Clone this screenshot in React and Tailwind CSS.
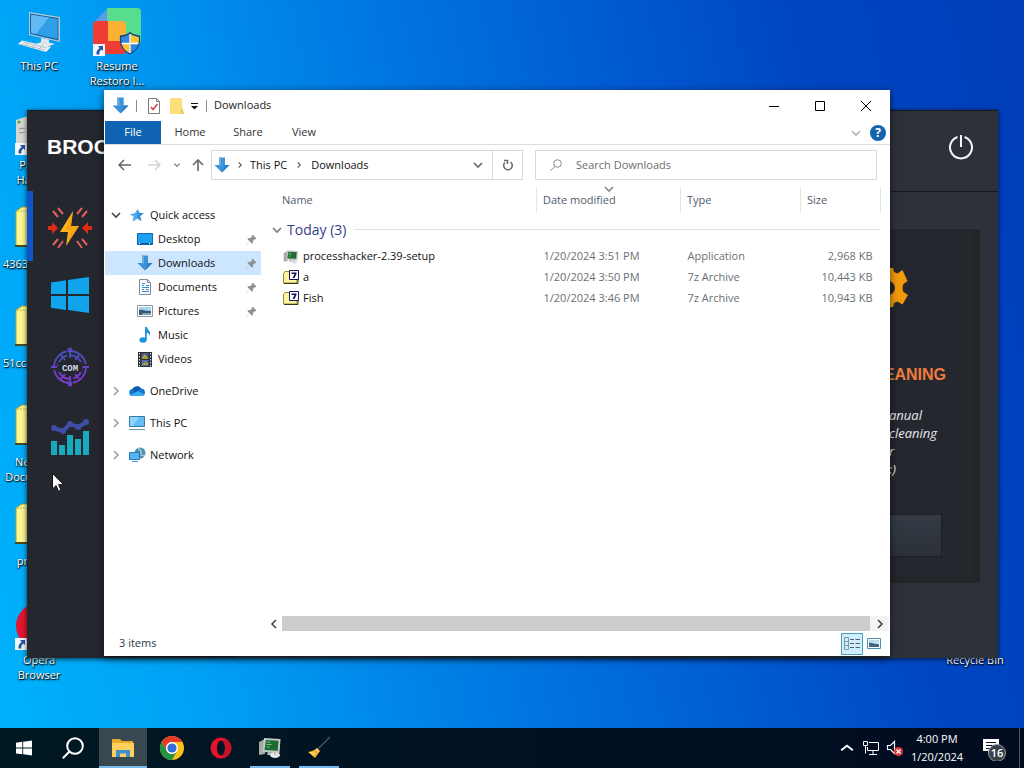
import React from "react";

const LABEL_SHADOW = "[text-shadow:0_1px_2px_rgba(0,0,0,0.95),1px_1px_1px_rgba(0,0,0,0.8)]";

/* ---------- shared icons ---------- */

function DownArrow({ className }) {
  return (
    <svg viewBox="0 0 16 16" className={className} aria-hidden="true">
      <path d="M5 .5h6v7.5h4.5L8 15.5.5 8H5z" fill="#3c92d8" />
      <path d="M5 .5h2v8H5z" fill="#66aee6" />
      <path d="M11 8h4.5L8 15.5z" fill="#2f7fc4" />
    </svg>
  );
}

function Chevron({ dir = "right", className }) {
  const d = { right: "M4 2l4 4-4 4", down: "M2 4l4 4 4-4", left: "M8 2L4 6l4 4", up: "M1 8l5-4 5 4" }[dir];
  return (
    <svg viewBox="0 0 12 12" className={className} fill="none" stroke="currentColor" strokeWidth="1.6" aria-hidden="true">
      <path d={d} />
    </svg>
  );
}

function ShortcutBadge() {
  return (
    <svg viewBox="0 0 12 12" className="absolute bottom-0 left-0 size-3" aria-hidden="true">
      <path d="M0 0h12v12H0z" fill="#f4f6fa" />
      <path d="M5 2h5v5L8.300 5.500C6.500 7 6 8.500 6.500 10.500H3.500C3 7.500 4.500 5.500 6.700 3.900z" fill="#2257a8" />
    </svg>
  );
}

function ComputerIcon() {
  return (
    <svg viewBox="0 0 48 48" className="size-12" aria-hidden="true">
      <path d="M14 4l31 5v25L14 27z" fill="#b9c9d6" />
      <path d="M15 5.500l28.500 4.500v22.500L15 26z" fill="#1262a6" />
      <path d="M16 6.800l26.500 4.200v20L16 25z" fill="#2f9fe8" />
      <path d="M16 6.800l18 2.800-13 16.500-5-1.200z" fill="#62baf4" />
      <path d="M26 30l8 1.500v3l6 1.500-8 3-11-3 5-2z" fill="#dfe5ea" />
      <path d="M7 32.500l29 6.500-5 5L3 36z" fill="#eef1f4" />
      <path d="M8 34l24 6M6 36l24 6M14 34l-4 4M21 35.500l-4 4.500M28 37l-5 5" stroke="#aab4bd" strokeWidth=".8" />
    </svg>
  );
}

function RestoroIcon() {
  return (
    <svg viewBox="0 0 48 48" className="size-12" aria-hidden="true">
      <path d="M14 0h30a4 4 0 014 4v30H14z" fill="#58dc8d" />
      <path d="M14 1v12H2z" fill="#5b9be8" />
      <path d="M4 13h11v20h17v13H4a4 4 0 01-4-4V17a4 4 0 014-4z" fill="#ef3d36" />
      <path d="M15 13h14a4 4 0 014 4v16H15z" fill="#f9b233" />
      <path d="M37 24c3 2.500 6 3 10 3.500 1 9-2 15-10 19-8-4-11-10-10-19 4-.5 7-1 10-3.500z" fill="#12477c" />
      <path d="M36.300 26v9H28.500c-.4-2-.4-4-.3-6 3-.5 5.600-1 8.100-3z" fill="#2f86dc" />
      <path d="M37.700 26v9h7.800c.4-2 .4-4 .3-6-3-.5-5.600-1-8.100-3z" fill="#ffc52e" />
      <path d="M36.300 36v9c-4-2-6.500-5-7.500-9z" fill="#ffc52e" />
      <path d="M37.700 36v9c4-2 6.500-5 7.500-9z" fill="#2f86dc" />
      <path d="M37 26v19M28.500 35.500h17" stroke="#fff" strokeWidth="1.500" />
    </svg>
  );
}

function ArchiveFolder() {
  return (
    <svg viewBox="0 4 48 48" className="size-12" aria-hidden="true">
      <path d="M1 9l6-4h12l5 4h20v35H1z" fill="#fbf793" stroke="#a5a23c" />
      <path d="M11 9v35" stroke="#ece27c" strokeWidth="1.500" />
      <path d="M2 9h20" stroke="#b7b04a" strokeDasharray="2 1" />
      <path d="M0 44h45" stroke="#4c4a17" strokeWidth="2" />
    </svg>
  );
}

function HackerDesktopIcon() {
  return (
    <svg viewBox="0 0 48 48" className="size-12" aria-hidden="true">
      <path d="M1 13l12-4v27l-12 3z" fill="#d5d6d2" />
      <path d="M13 9h24v27H13z" fill="#b4b7b3" />
      <circle cx="4" cy="15" r="1.500" fill="#49a244" />
      <path d="M4 22l6-1M4 26l6-1" stroke="#8d918d" />
      <path d="M14 12h20v18H14z" fill="#28502c" />
    </svg>
  );
}

function OperaIcon({ className }) {
  return (
    <svg viewBox="0 0 24 24" className={className} aria-hidden="true">
      <path fillRule="evenodd" fill="#e3152e" d="M12 .5a11.500 11.500 0 100 23 11.500 11.500 0 000-23zm0 3.500c2.700 0 4.300 3.600 4.300 8s-1.600 8-4.300 8-4.300-3.600-4.300-8S9.300 4 12 4z" />
      <path fill="#a90f20" d="M12 20c2.700 0 4.300-3.600 4.300-8S14.700 4 12 4c2.500-1.800 5-1.600 7.500-.8a11.500 11.500 0 010 17.600C17 21.600 14.500 21.800 12 20z" opacity=".55" />
    </svg>
  );
}

function MonitorApp({ className }) {
  return (
    <svg viewBox="0 0 24 24" className={className} aria-hidden="true">
      <path d="M1 6l6-3v15l-6 1z" fill="#a7aba7" />
      <path d="M6 2l16.500 1-1 14L4.500 16z" fill="#c3c9c3" />
      <path d="M8 4l12.500.8-.8 10L6.500 14z" fill="#1d6a32" />
      <path d="M9 6h3M8.500 8.500h5M8.500 11h3" stroke="#7cc583" />
      <path d="M10 16l5 .3V19H9z" fill="#b8bcb8" />
      <ellipse cx="17" cy="19" rx="5" ry="3" fill="#e5e7e8" />
      <path d="M17 16v3" stroke="#8a8f90" />
    </svg>
  );
}

/* ---------- desktop ---------- */

function DesktopIcon({ label, shortcut, start, children }) {
  return (
    <a href="#open" className={`flex h-[99px] w-[78px] flex-col items-center gap-0.5 pt-2 text-[11px] leading-[15px] text-white ${LABEL_SHADOW}`}>
      <span className="relative block size-12">
        {children}
        {shortcut && <ShortcutBadge />}
      </span>
      <span className={`w-[72px] whitespace-pre-line ${start ? "text-left" : "text-center"}`}>{label}</span>
    </a>
  );
}

/* ---------- cleaner window ---------- */

function BoltIcon() {
  return (
    <svg viewBox="0 0 44 44" className="size-11" aria-hidden="true">
      <path d="M25 5L12 26h8l-2 14 13-20h-8z" fill="#ffb51e" />
      <path d="M25 5l-2 15h8L18 40l5-16h-6z" fill="#f59a0c" opacity=".6" />
      <path d="M0 20h4v-4l6 6-6 6v-4H0zM44 20h-4v-4l-6 6 6 6v-4h4z" fill="#dd2a12" />
      <path d="M5 5l5 6M10 2l5 6M39 5l-5 6M34 2l-5 6M5 39l5-6M10 42l5-7M39 39l-5-6M34 42l-5-7" stroke="#df6157" strokeWidth="2" />
    </svg>
  );
}

function WindowsIcon({ className, color }) {
  return (
    <svg viewBox="0 0 38 36" className={className} fill={color} aria-hidden="true">
      <path d="M0 5.500L15 3.300V17H0zM17 3L38 0v17H17zM0 19h15v14L0 30.800zM17 19h21v17l-21-3z" />
    </svg>
  );
}

function ComIcon() {
  return (
    <svg viewBox="0 0 40 40" className="size-10" fill="none" aria-hidden="true">
      <defs>
        <linearGradient id="com" x1="0" y1="0" x2="0" y2="1">
          <stop offset="0" stopColor="#4052b8" />
          <stop offset="1" stopColor="#8b35dc" />
        </linearGradient>
      </defs>
      <g stroke="url(#com)" strokeWidth="1.800">
        <circle cx="20" cy="20" r="16" strokeDasharray="22 3" />
        <circle cx="20" cy="20" r="12" strokeDasharray="15 4" />
        <path d="M20 1v10M20 29v10M1 20h6M33 20h6M11 8l4 5M29 8l-4 5M11 32l4-5M29 32l-4-5" />
        <circle cx="20" cy="3" r="1.500" />
        <circle cx="20" cy="37" r="1.500" />
      </g>
      <path d="M8 15h24v10H8z" fill="#25272f" />
      <text x="20" y="24" textAnchor="middle" fontSize="9" fontWeight="700" fill="#d3d8e6" fontFamily="Liberation Mono, monospace">COM</text>
    </svg>
  );
}

function StatsIcon() {
  return (
    <svg viewBox="0 0 40 38" className="h-[38px] w-10" aria-hidden="true">
      <path d="M1 23h6v14H1zM9 27h6v10H9zM17 17h6v20h-6zM25 21h6v16h-6zM33 13h6v24h-6z" fill="#19a9bd" />
      <path d="M3 10l10 3 7-7 8 3 9-5" fill="none" stroke="#3f4da4" strokeWidth="4" />
      <g fill="#3f4da4">
        <circle cx="4" cy="10" r="3" />
        <circle cx="13" cy="13" r="3" />
        <circle cx="20" cy="6" r="3" />
        <circle cx="28" cy="9" r="3" />
        <circle cx="36" cy="4" r="3" />
      </g>
    </svg>
  );
}

function CleanerWindow() {
  return (
    <section aria-label="Cleaner" className="absolute top-[110px] right-[26px] bottom-[70px] left-[27px] flex overflow-hidden border-t border-[#17191d] bg-[#2d323a] font-['Liberation_Sans',sans-serif] shadow-[0_1px_5px_rgba(0,0,0,0.7)]">
      <aside className="flex w-52 shrink-0 flex-col bg-[#25272f]">
        <h1 className="flex h-20 items-center pb-2 pl-5 text-[21px] font-bold text-white">BROOM</h1>
        <nav className="flex flex-col">
          <button aria-label="Boost" className="flex h-[70px] items-center border-l-[6px] border-[#0f55c8] pt-1 pl-[15px]"><BoltIcon /></button>
          <button aria-label="Windows" className="flex h-[68px] items-center pl-6"><WindowsIcon className="h-9 w-[38px]" color="#10a4ec" /></button>
          <button aria-label="COM" className="flex h-[76px] items-center pl-[23px]"><ComIcon /></button>
          <button aria-label="Statistics" className="flex h-16 items-center pl-[23px]"><StatsIcon /></button>
        </nav>
      </aside>
      <div className="flex min-w-0 flex-1 flex-col">
        <header className="flex h-[81px] shrink-0 items-center justify-end border-b border-[#16191d] pr-6 pb-2">
          <button aria-label="Power">
            <svg viewBox="0 0 26 26" className="size-[26px]" fill="none" stroke="#f5f6f7" strokeWidth="2" aria-hidden="true">
              <path d="M9.500 3a11 11 0 107 0M13 1v12" />
            </svg>
          </button>
        </header>
        <article className="mt-[37px] mr-[18px] ml-6 flex h-[354px] flex-col items-end border-r-8 border-b-8 border-[#232527] bg-[#25272f]">
          <svg viewBox="0 0 40 40" className="mt-[38px] mr-16 size-10" fill="#f39a0b" aria-hidden="true">
            <path fillRule="evenodd" d="M15 1h10l1 4 3.500 1.500L34.500 3l5 11-4 3a9 9 0 000 8l4.500 3-5.500 9.500-5-3L26 36l-1 4H15l-1-4-3.500-1.500-5 3L0 28l4.500-3a9 9 0 000-8L.5 14 5.500 3l5 3.500L14 5zm5 13a7 7 0 100 14 7 7 0 000-14z" />
          </svg>
          <h2 className="mt-[59px] mr-[26px] text-[16px] leading-[18px] font-bold text-[#ef7c3e]">CLEANING</h2>
          <p className="mt-[22px] w-[83px] font-['Open_Sans',sans-serif] text-[13px] leading-[18px] text-[#e8eaec] italic">
            anual<br />cleaning<br />r<br />:)
          </p>
          <button aria-label="Start cleaning" className="mt-9 mr-[30px] h-[43px] w-40 border border-[#1c1f24] bg-linear-to-b from-[#343b44] to-[#2b3038]" />
        </article>
      </div>
    </section>
  );
}

/* ---------- explorer window ---------- */

function StarIcon() {
  return (
    <svg viewBox="0 0 16 16" className="size-3.5" aria-hidden="true">
      <path d="M9 1l1.500 4.500L16 6l-4.300 3.200L13 15l-4.600-3L3 15l1.500-5.300L0 7l5.700-.8z" fill="#2c8ee0" />
      <path d="M9 1L8.400 12 3 15l1.500-5.300L0 7l5.700-.8z" fill="#54abef" />
    </svg>
  );
}

function DesktopSmall() {
  return (
    <svg viewBox="0 0 16 12" className="h-3 w-4" aria-hidden="true">
      <path d="M.5.500h15v11H.5z" fill="#1ba0f2" stroke="#1468ac" />
      <path d="M1 10.500h14" stroke="#0e5a98" />
      <path d="M2 10.500h1M12 10.500h1" stroke="#fff" />
    </svg>
  );
}

function DocumentSmall() {
  return (
    <svg viewBox="0 0 14 16" className="h-4 w-3.5" aria-hidden="true">
      <path d="M1.500.500h8l3 3v12h-11z" fill="#f7fbff" stroke="#7e8c98" />
      <path d="M9.500.500v3h3" fill="none" stroke="#7e8c98" />
      <path d="M4 4.500h3M4 6.500h2M8 6.500h3M4 8.500h7M4 10.500h2M8 10.500h3M4 12.500h7" stroke="#3a8cca" />
    </svg>
  );
}

function PictureSmall() {
  return (
    <svg viewBox="0 0 16 12" className="h-3 w-4" aria-hidden="true">
      <path d="M.5.500h15v11H.5z" fill="#fff" stroke="#8d99a5" />
      <path d="M2 2h12v4H2z" fill="#a7d3f1" />
      <path d="M2 5c4-1 5 1 12 1v4H2z" fill="#36597a" />
      <path d="M6 8h8v2H4z" fill="#7fa4b4" />
    </svg>
  );
}

function MusicSmall() {
  return (
    <svg viewBox="0 0 14 16" className="h-4 w-3.5" aria-hidden="true">
      <ellipse cx="5" cy="13" rx="3.600" ry="2.700" fill="#1f93e0" />
      <path d="M7 0h1.800c.5 3 4.700 4 3 9.500C12 7 10 6 8.800 5.800V13H7z" fill="#1f93e0" />
    </svg>
  );
}

function VideoSmall() {
  return (
    <svg viewBox="0 0 14 15" className="h-[15px] w-3.5" aria-hidden="true">
      <path d="M0 0h14v15H0z" fill="#2d2f38" />
      <path d="M1.500 1v14M12.500 1v14" stroke="#e4e6ea" strokeDasharray="1.500 1.500" />
      <path d="M3.500 1h7v6h-7z" fill="#4a5a8e" />
      <path d="M3.500 8h7v6h-7z" fill="#506aa5" />
      <path d="M4 5l3-3 3 4v1H4zM4 12l3-2 3 1v2H4z" fill="#a3a13e" />
    </svg>
  );
}

function CloudSmall() {
  return (
    <svg viewBox="0 0 16 12" className="h-3 w-4" aria-hidden="true">
      <path d="M4 11a3.500 3.500 0 01-.5-7A5 5 0 0112 3.500 3.800 3.800 0 0113 11z" fill="#1478d0" />
      <path d="M3.500 4A5 5 0 0112 3.500L6 8z" fill="#0b5bab" />
      <path d="M1 10l8-4 6.500 3.500A3 3 0 0113 11H4a4 4 0 01-3-1z" fill="#35aaf0" />
    </svg>
  );
}

function PcSmall() {
  return (
    <svg viewBox="0 0 18 16" className="h-4 w-[18px]" aria-hidden="true">
      <path d="M1.500 1.500h15v10h-15z" fill="#62bdf5" stroke="#3b7aa8" />
      <path d="M2 2h9L5 11H2z" fill="#8fd4fb" />
      <path d="M1 14.500h16" stroke="#7399b4" />
    </svg>
  );
}

function NetworkSmall() {
  return (
    <svg viewBox="0 0 18 16" className="h-4 w-[18px]" aria-hidden="true">
      <circle cx="12" cy="6" r="5.500" fill="#4c8fb0" />
      <path d="M10 1c2 2 4 2 3 5s2 3 4 2" fill="none" stroke="#a3cbd4" strokeWidth="1.500" />
      <path d="M1.500 5.500h10v7h-10z" fill="#55b5f2" stroke="#2877b4" />
      <path d="M4 14.500h6" stroke="#4a9ad2" />
    </svg>
  );
}

function PinIcon() {
  return (
    <svg viewBox="0 0 12 12" className="size-[11px]" aria-hidden="true">
      <path d="M7 .5L11.500 5l-1 .8-1-.2-2 2 .2 2-1.200 1L4 8 .800 11.500.500 11.200 4 8 1.500 5.500l1-1.200 2 .2 2-2-.2-1z" fill="#8c9197" />
    </svg>
  );
}

const QUICK = [
  { name: "Desktop", Icon: DesktopSmall, pinned: true },
  { name: "Downloads", Icon: DownArrow, pinned: true, active: true },
  { name: "Documents", Icon: DocumentSmall, pinned: true },
  { name: "Pictures", Icon: PictureSmall, pinned: true },
  { name: "Music", Icon: MusicSmall },
  { name: "Videos", Icon: VideoSmall },
];

const ROOTS = [
  { name: "OneDrive", Icon: CloudSmall },
  { name: "This PC", Icon: PcSmall },
  { name: "Network", Icon: NetworkSmall },
];

function SidebarTree() {
  return (
    <nav aria-label="Folders" className="flex w-[157px] shrink-0 flex-col gap-2 pt-[18px] text-[#111]">
      <div>
        <a href="#quick" className="flex h-6 items-center pl-1">
          <Chevron dir="down" className="mr-1.5 ml-0.5 size-3 text-[#444]" />
          <span className="mr-1 flex w-[18px] justify-center"><StarIcon /></span>
          Quick access
        </a>
        {QUICK.map(({ name, Icon, pinned, active }) => (
          <a key={name} href={`#${name}`} className={`ml-px flex h-6 items-center pr-1 pl-8 ${active ? "bg-[#cce6ff]" : ""}`}>
            <span className="mr-[5px] flex w-4 justify-center"><Icon className="size-4" /></span>
            <span className="flex-1">{name}</span>
            {pinned && <PinIcon />}
          </a>
        ))}
      </div>
      {ROOTS.map(({ name, Icon }) => (
        <a key={name} href={`#${name}`} className="flex h-6 items-center pl-1">
          <Chevron className="mr-1.5 ml-0.5 size-3 text-[#a0a0a0]" />
          <span className="mr-1 flex w-[18px] justify-center"><Icon /></span>
          {name}
        </a>
      ))}
    </nav>
  );
}

function SevenZipIcon() {
  return (
    <svg viewBox="0 0 16 15" className="h-[15px] w-4" aria-hidden="true">
      <path d="M.5 3.500l1.500-2h4l1 1.500h7v10H.5z" fill="#fbf5a2" stroke="#8d8a30" />
      <path d="M1 13.500h14V8" fill="none" stroke="#3b3a18" />
      <path d="M6.500.500h9v9h-9z" fill="#fff" stroke="#14145e" />
      <path d="M8.500 2.500h5v1.500l-2 4H9.500l2-4h-3z" fill="#14145e" />
    </svg>
  );
}

const FILES = [
  { name: "processhacker-2.39-setup", date: "1/20/2024 3:51 PM", type: "Application", size: "2,968 KB", app: true },
  { name: "a", date: "1/20/2024 3:50 PM", type: "7z Archive", size: "10,443 KB" },
  { name: "Fish", date: "1/20/2024 3:46 PM", type: "7z Archive", size: "10,943 KB" },
];

function FileTable() {
  const th = "relative h-[26px] border-l border-[#e2e4e6] pl-1.5 text-left font-normal";
  return (
    <table className="w-full table-fixed border-collapse text-[#6b6f74]">
      <colgroup>
        <col />
        <col className="w-36" />
        <col className="w-[120px]" />
        <col className="w-20" />
      </colgroup>
      <thead className="text-[#4f5c6e]">
        <tr>
          <th className="pl-[17px] text-left font-normal">Name</th>
          <th className={th}>
            Date modified
            <Chevron dir="down" className="absolute -top-1 left-[66px] size-3 text-[#8a8a8a]" />
          </th>
          <th className={th}>Type</th>
          <th className={`${th} border-r`}>Size</th>
        </tr>
      </thead>
      <tbody>
        <tr>
          <th colSpan={4} className="h-[33px] p-0 text-left font-normal">
            <span className="flex items-center gap-1 pl-1.5 text-[14px] text-[#35408a]">
              <Chevron dir="down" className="size-3 text-[#7a7a7a]" />
              Today (3)
              <span className="ml-1 h-px flex-1 bg-[#dfe2e6]" />
            </span>
          </th>
        </tr>
        {FILES.map((f) => (
          <tr key={f.name} className="h-[21px]">
            <td className="p-0 pl-[18px] text-[#111]">
              <span className="flex items-center gap-1">
                {f.app ? <MonitorApp className="size-4" /> : <SevenZipIcon />}
                {f.name}
              </span>
            </td>
            <td className="p-0 pl-[7px]">{f.date}</td>
            <td className="p-0 pl-[7px]">{f.type}</td>
            <td className="p-0 pr-2 text-right">{f.size}</td>
          </tr>
        ))}
      </tbody>
    </table>
  );
}

function ExplorerWindow() {
  return (
    <section aria-label="Downloads" className="absolute top-[90px] right-[134px] bottom-[72px] left-[104px] flex flex-col bg-white shadow-[0_2px_8px_rgba(0,0,0,0.6)]">
      <header className="flex h-[31px] shrink-0 items-center pr-px pl-2 text-[#222]">
        <DownArrow className="size-[17px]" />
        <span className="mx-[7px] h-3 w-px bg-[#8b8b8b]" />
        <button aria-label="Properties" className="ml-[3px]">
          <svg viewBox="0 0 14 16" className="h-4 w-3.5" aria-hidden="true">
            <path d="M1.500.500h8l3 3v12h-11z" fill="#fff" stroke="#7c7c7c" />
            <path d="M9.500.500v3h3" fill="none" stroke="#7c7c7c" />
            <path d="M4 9l2 2.500L10.500 6" fill="none" stroke="#d8404d" strokeWidth="1.600" />
          </svg>
        </button>
        <button aria-label="New folder" className="ml-[9px]">
          <svg viewBox="0 0 14 16" className="h-4 w-3.5" aria-hidden="true">
            <path d="M0 0h12v10l2 6H0z" fill="#fae07c" />
            <path d="M12 9l2 7h-3v-5z" fill="#ecc45a" />
          </svg>
        </button>
        <button aria-label="Customize toolbar" className="ml-1.5">
          <svg viewBox="0 0 9 8" className="h-2 w-[9px]" aria-hidden="true">
            <path d="M1 1.500h7" stroke="#111" />
            <path d="M1 4h7L4.500 7.500z" fill="#111" />
          </svg>
        </button>
        <span className="mx-[7px] h-3 w-px bg-[#8b8b8b]" />
        <h2>Downloads</h2>
        <div className="ml-auto flex text-black">
          <button aria-label="Minimize" className="flex h-[30px] w-[46px] items-center justify-center">
            <svg viewBox="0 0 10 10" className="size-2.5" stroke="currentColor" aria-hidden="true"><path d="M0 5.500h10" /></svg>
          </button>
          <button aria-label="Maximize" className="flex h-[30px] w-[46px] items-center justify-center">
            <svg viewBox="0 0 10 10" className="size-2.5" stroke="currentColor" fill="none" aria-hidden="true"><path d="M.5.500h9v9h-9z" /></svg>
          </button>
          <button aria-label="Close" className="flex h-[30px] w-[46px] items-center justify-center">
            <svg viewBox="0 0 10 10" className="size-2.5" stroke="currentColor" aria-hidden="true"><path d="M0 0l10 10M10 0L0 10" /></svg>
          </button>
        </div>
      </header>

      <div className="flex h-6 shrink-0 items-center border-b border-[#dcdcdc] pl-px text-[#333]">
        <button className="h-[23px] w-14 bg-[#0f63b0] text-white">File</button>
        <button className="w-[58px]">Home</button>
        <button className="w-[58px]">Share</button>
        <button className="w-[54px]">View</button>
        <button aria-label="Expand ribbon" className="ml-auto"><Chevron dir="down" className="size-3 text-[#b0b0b0]" /></button>
        <button aria-label="Help" className="mr-1 ml-2 flex size-4 items-center justify-center rounded-full bg-[#1464ac] text-[12px] leading-4 font-bold text-white">?</button>
      </div>

      <div className="flex h-10 shrink-0 items-center pr-[13px] pl-3.5">
        <button aria-label="Back">
          <svg viewBox="0 0 13 12" className="h-3 w-[13px]" fill="none" stroke="#666" strokeWidth="1.500" aria-hidden="true"><path d="M13 6H1M6 1L1 6l5 5" /></svg>
        </button>
        <button aria-label="Forward" className="ml-[17px]">
          <svg viewBox="0 0 13 12" className="h-3 w-[13px]" fill="none" stroke="#d2d2d2" strokeWidth="1.500" aria-hidden="true"><path d="M0 6h12M7 1l5 5-5 5" /></svg>
        </button>
        <button aria-label="Recent" className="ml-3"><Chevron dir="down" className="size-2 text-[#666]" /></button>
        <button aria-label="Up" className="mr-[7px] ml-[11px]">
          <svg viewBox="0 0 12 12" className="size-3" fill="none" stroke="#666" strokeWidth="1.600" aria-hidden="true"><path d="M6 12V1M1 6l5-5 5 5" /></svg>
        </button>
        <div className="flex h-[30px] min-w-0 flex-1 items-center border border-[#d9d9d9] pl-0.5 text-[#111]">
          <DownArrow className="size-4" />
          <Chevron className="mx-1.5 size-2 text-[#555]" />
          <a href="#pc">This PC</a>
          <Chevron className="mx-2 size-2 text-[#555]" />
          <a href="#downloads">Downloads</a>
          <button aria-label="Previous locations" className="mr-2 ml-auto"><Chevron dir="down" className="size-3 text-[#666]" /></button>
          <button aria-label="Refresh" className="flex h-full w-[30px] items-center justify-center border-l border-[#d9d9d9]">
            <svg viewBox="0 0 12 12" className="size-3" fill="none" stroke="#666" strokeWidth="1.500" aria-hidden="true">
              <path d="M8.500 3A4.300 4.300 0 112.800 3.600M2 1.500h3.500V5" />
            </svg>
          </button>
        </div>
        <label className="ml-3 flex h-[30px] w-[342px] items-center border border-[#d9d9d9] pl-3.5">
          <svg viewBox="0 0 12 12" className="size-3" fill="none" stroke="#888" aria-hidden="true">
            <circle cx="7.500" cy="4.500" r="3.800" />
            <path d="M5 7.500L.5 11.500" />
          </svg>
          <input type="text" aria-label="Search Downloads" placeholder="Search Downloads" className="ml-3.5 min-w-0 flex-1 bg-transparent outline-none placeholder:text-[#6d6d6d]" />
        </label>
      </div>

      <div className="flex min-h-0 flex-1">
        <SidebarTree />
        <div className="ml-1 flex min-w-0 flex-1 flex-col">
          <div className="flex-1 pt-0.5 pr-[9px]"><FileTable /></div>
          <div className="mr-px flex h-[15px] items-stretch">
            <button aria-label="Scroll left" className="flex w-[17px] items-center justify-center text-[#444]"><Chevron dir="left" className="size-3" /></button>
            <div className="flex-1 bg-[#cdcdcd]" />
            <button aria-label="Scroll right" className="flex w-[19px] items-center justify-center bg-[#f3f3f3] text-[#444]"><Chevron className="size-3" /></button>
          </div>
        </div>
      </div>

      <footer className="flex h-[25px] shrink-0 items-center pl-[15px] text-[#26374c]">
        3 items
        <button aria-label="Details view" className="ml-auto flex size-[22px] items-center justify-center border border-[#4a9cbe] bg-[#cdeefa]">
          <svg viewBox="0 0 16 13" className="h-[13px] w-4" fill="none" aria-hidden="true">
            <path d="M.5.500h4v12h-4zM.5 4.500h4M.5 8.500h4" stroke="#7b98a8" />
            <path d="M6 2.500h4M11.500 2.500H16M6 6.500h4M11.500 6.500H16M6 10.500h4M11.500 10.500H16" stroke="#555c63" />
          </svg>
        </button>
        <button aria-label="Thumbnail view" className="mr-[9px] ml-1">
          <svg viewBox="0 0 14 11" className="h-[11px] w-3.5" aria-hidden="true">
            <path d="M.5.500h13v10H.5z" fill="#fff" stroke="#4a90b4" />
            <path d="M2 2h10v3H2z" fill="#b8dcf0" />
            <path d="M2 5c3-1 5 1 10 1v3H2z" fill="#3d6780" />
          </svg>
        </button>
      </footer>
    </section>
  );
}

/* ---------- taskbar ---------- */

function TaskButton({ label, running, active, children }) {
  return (
    <button aria-label={label} className={`relative flex h-10 w-12 items-center justify-center ${active ? "bg-[#374850]" : ""}`}>
      {children}
      {running && <span className={`absolute bottom-0 h-0.5 bg-[#76b9ed] ${active ? "w-12" : "w-10"}`} />}
    </button>
  );
}

function Taskbar() {
  return (
    <footer className="flex h-10 shrink-0 items-center bg-linear-to-r from-[#001824] to-[#020b20] text-white">
      <button aria-label="Start" className="flex h-10 w-12 items-center justify-center"><WindowsIcon className="size-4" color="#ffffff" /></button>
      <button aria-label="Search" className="mr-px flex h-10 w-[50px] items-center justify-center">
        <svg viewBox="0 0 22 22" className="size-[22px]" fill="none" stroke="#fff" strokeWidth="2" aria-hidden="true">
          <circle cx="13" cy="9" r="7.800" />
          <path d="M7.500 14.500L.8 21.200" />
        </svg>
      </button>
      <div className="flex gap-px">
        <TaskButton label="File Explorer" running active>
          <svg viewBox="0 0 22 18" className="h-[18px] w-[22px]" aria-hidden="true">
            <path d="M0 0h8l2 2h11v15H0z" fill="#e9a92e" />
            <path d="M0 4h22v14H0z" fill="#ffd05c" />
            <path d="M4 18v-7h14v7h-4v-3.500H8V18z" fill="#3f8fd0" />
          </svg>
        </TaskButton>
        <TaskButton label="Chrome">
          <svg viewBox="0 0 24 24" className="size-6" aria-hidden="true">
            <circle cx="12" cy="12" r="12" fill="#fbc116" />
            <path d="M1.600 6A12 12 0 0122.400 6H12a6 6 0 00-5.200 9z" fill="#e33b2e" />
            <path d="M1.600 6A12 12 0 0012 24l5.200-9A6 6 0 016.800 15z" fill="#229342" />
            <circle cx="12" cy="12" r="6" fill="#fff" />
            <circle cx="12" cy="12" r="4.600" fill="#2e6fdf" />
          </svg>
        </TaskButton>
        <TaskButton label="Opera"><OperaIcon className="size-[22px]" /></TaskButton>
        <TaskButton label="Process Hacker setup" running><MonitorApp className="size-6" /></TaskButton>
        <TaskButton label="Cleaner" running>
          <svg viewBox="0 0 24 24" className="size-6" aria-hidden="true">
            <path d="M23 1L11 13" stroke="#4c5058" strokeWidth="1.500" />
            <path d="M10 12l3 3-5 7-7-6c3-1 6-1 9-4z" fill="#f5b52c" />
            <path d="M3 16.500l4 1-1 2M9 13l3 2.500" fill="none" stroke="#fbe0a0" strokeWidth="1.200" />
          </svg>
        </TaskButton>
      </div>
      <div className="ml-auto flex items-center">
        <button aria-label="Hidden icons"><Chevron dir="up" className="size-3.5" /></button>
        <svg viewBox="0 0 18 16" className="ml-2 h-4 w-[18px]" fill="none" stroke="#fff" role="img" aria-label="Network">
          <path d="M7 2.500h9.500v8h-11V7M11 11v3M7 14.500h8M1.500 1.500h4v4h-4zM3.500 6v7.500" />
        </svg>
        <svg viewBox="0 0 18 16" className="ml-1.5 h-4 w-[18px]" role="img" aria-label="Muted">
          <path d="M1.500 5.500h3l4-4v12l-4-4h-3z" fill="none" stroke="#fff" strokeWidth="1.200" />
          <circle cx="12.500" cy="11.500" r="4.500" fill="#d9373f" />
          <path d="M10.500 9.500l4 4M14.500 9.500l-4 4" stroke="#fff" strokeWidth="1.200" />
        </svg>
        <time className="ml-1.5 w-[54px] text-center leading-[18px] whitespace-nowrap">4:00 PM<br />1/20/2024</time>
        <button aria-label="16 notifications" className="relative ml-[19px] h-[26px] w-7">
          <svg viewBox="0 0 28 26" className="size-full" aria-hidden="true">
            <path d="M0 4h16v12H8l-3 3v-3H0z" fill="#fff" />
            <path d="M3 7.500h10M3 10.500h10M3 13.500h5" stroke="#0a1420" />
            <circle cx="14" cy="18" r="8.500" fill="#3a4048" stroke="#9aa0a6" />
          </svg>
          <span className="absolute inset-x-0 top-[9px] text-center leading-[18px] font-semibold">16</span>
        </button>
        <span className="mr-1 ml-2 h-10 w-px bg-[#4b5566]" />
      </div>
    </footer>
  );
}

export default function App() {
  return (
    <div className="flex min-h-screen flex-col bg-[#0078d7] font-['Open_Sans',sans-serif] text-[11px]">
      <main className="relative min-h-[700px] flex-1 overflow-hidden bg-[linear-gradient(78deg,#00b2fc_0%,#00a0f4_18%,#0080e6_38%,#0060d6_60%,#0046c4_80%,#003db8_100%)]">
        <div className="flex items-start">
          <div className="flex flex-col">
            <DesktopIcon label="This PC"><ComputerIcon /></DesktopIcon>
            <DesktopIcon label={"Process\nHacker 2"} shortcut><HackerDesktopIcon /></DesktopIcon>
            <DesktopIcon label="4363" start><ArchiveFolder /></DesktopIcon>
            <DesktopIcon label="51cc" start><ArchiveFolder /></DesktopIcon>
            <DesktopIcon label={"New Text\nDocuments..."}><ArchiveFolder /></DesktopIcon>
            <DesktopIcon label="program"><ArchiveFolder /></DesktopIcon>
            <DesktopIcon label={"Opera\nBrowser"} shortcut><OperaIcon className="size-12" /></DesktopIcon>
          </div>
          <DesktopIcon label={"Resume\nRestoro I..."} shortcut><RestoroIcon /></DesktopIcon>
        </div>
        <div className="absolute top-[594px] right-[10px]">
          <DesktopIcon label="Recycle Bin"><span /></DesktopIcon>
        </div>

        <CleanerWindow />
        <ExplorerWindow />

        <svg viewBox="0 0 12 19" className="absolute top-[473px] left-[52px] h-[19px] w-3" aria-hidden="true">
          <path d="M.5.500v15.500l3.600-3.400 2.500 5.700 2.400-1L6.600 11.700h5z" fill="#fff" stroke="#111" />
        </svg>
      </main>
      <Taskbar />
    </div>
  );
}
